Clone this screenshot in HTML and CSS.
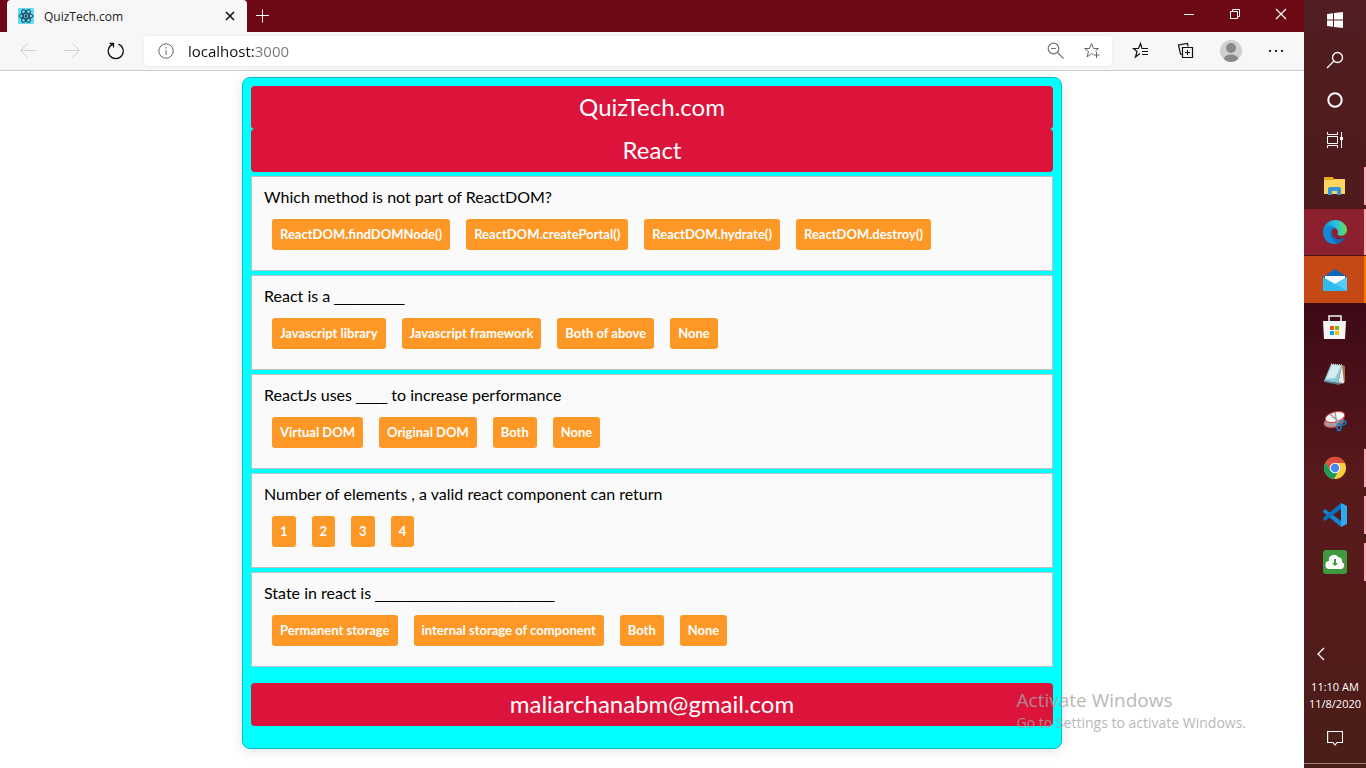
FILE: index.html
```html
<!DOCTYPE html>
<html lang="en">
<head>
<meta charset="utf-8">
<title>QuizTech.com</title>
<link rel="stylesheet" href="styles.css">
</head>
<body>
<div class="desktop">
  <div class="browser">
    <header class="titlebar">
      <div class="tab">
        <svg class="favicon" width="16" height="16" viewBox="0 0 16 16" fill="none" stroke="#20414d"><rect width="16" height="16" rx="1" fill="#61dafb" stroke="none"/><ellipse cx="8" cy="8" rx="7" ry="2.7"/><ellipse cx="8" cy="8" rx="7" ry="2.7" transform="rotate(60 8 8)"/><ellipse cx="8" cy="8" rx="7" ry="2.7" transform="rotate(120 8 8)"/><circle cx="8" cy="8" r="1" fill="#20414d"/></svg>
        <span class="tab-title">QuizTech.com</span>
        <button class="tab-close" aria-label="Close tab"><svg width="10" height="10" viewBox="0 0 10 10" stroke="#111" stroke-width="1.6"><path d="M1 1l8 8M9 1l-8 8"/></svg></button>
      </div>
      <button class="new-tab" aria-label="New tab"><svg width="14" height="14" viewBox="0 0 14 14" stroke="#fff"><path d="M6.500 .5v13M0 6.500h13"/></svg></button>
      <div class="window-controls">
        <button aria-label="Minimize"><svg width="12" height="12" viewBox="0 0 12 12" stroke="#fff"><path d="M1 6.500h10"/></svg></button>
        <button aria-label="Restore"><svg width="12" height="12" viewBox="0 0 12 12" fill="none" stroke="#fff"><path d="M1.500 3.500h7v7h-7zM3.500 3.500v-2h7v7h-2"/></svg></button>
        <button aria-label="Close"><svg width="12" height="12" viewBox="0 0 12 12" stroke="#fff" stroke-width="1.200"><path d="M1 1l10 10M11 1L1 11"/></svg></button>
      </div>
    </header>
    <nav class="toolbar">
      <button class="nav-button" aria-label="Back"><svg width="18" height="18" viewBox="0 0 18 18" fill="none" stroke="#cfcfcf"><path d="M17 8.500H1.500M8.500 1.500l-7 7 7 7"/></svg></button>
      <button class="nav-button" aria-label="Forward"><svg width="18" height="18" viewBox="0 0 18 18" fill="none" stroke="#cfcfcf"><path d="M1 8.500h15.500M9.500 1.500l7 7-7 7"/></svg></button>
      <button class="nav-button" aria-label="Refresh"><svg width="18" height="18" viewBox="0 0 18 18" fill="none" stroke="#111" stroke-width="1.300"><path d="M11.500 2.200A7.500 7.500 0 1 1 6 2.200M2.500 1.500H6.500V5.500"/></svg></button>
      <div class="address">
        <svg width="16" height="16" viewBox="0 0 16 16" fill="none" stroke="#666"><circle cx="8" cy="8" r="7.200"/><path d="M8 7v5M8 4v1.500"/></svg>
        <input class="url" type="text" value="localhost:3000" aria-label="Address">
        <button aria-label="Zoom"><svg width="18" height="18" viewBox="0 0 18 18" fill="none" stroke="#767676" stroke-width="1.200"><circle cx="6.500" cy="6.500" r="5.300"/><path d="M4 6.500h5M10.500 10.500l6 6"/></svg></button>
        <button aria-label="Add to favorites"><svg width="18" height="18" viewBox="0 0 18 18" fill="none" stroke="#666"><path d="M10 12.500L8.500 11.500 4 15l1.500-5.500L1.500 6.500h5l2-5 2 5h5L12.500 9M13.500 10v6M10.500 13h6"/></svg></button>
      </div>
      <div class="tools">
        <button aria-label="Favorites"><svg width="18" height="18" viewBox="0 0 18 18" fill="none" stroke="#111" stroke-width="1.200"><path d="M8 11.500L3.500 15 5 9.500 1.500 6.500h5l2-5L10 6.500h6M10 9.500h6M10 12.500h6"/></svg></button>
        <button aria-label="Collections"><svg width="18" height="18" viewBox="0 0 18 18" fill="none" stroke="#111" stroke-width="1.200"><path d="M5.500 5.500h10v10h-10zM10.500 8v5M8 10.500h5M5 12.500L3.500 12 1.500 3l9-1.500.5 3"/></svg></button>
        <button aria-label="Profile"><svg width="22" height="22" viewBox="0 0 22 22"><circle cx="11" cy="11" r="11" fill="#d2d0ce"/><circle cx="11" cy="8" r="5" fill="#8a8886"/><path d="M4 19c0-6 14-6 14 0-4 4-10 4-14 0z" fill="#8a8886"/></svg></button>
        <button aria-label="Settings and more"><svg width="16" height="16" viewBox="0 0 16 16" fill="#222"><path d="M1 7h2v2H1zM7 7h2v2H7zM13 7h2v2h-2z"/></svg></button>
      </div>
    </nav>
    <main class="page">
      <div class="quiz">
        <h1 class="banner">QuizTech.com</h1>
        <h2 class="banner">React</h2>
        <div class="questions">
          <section class="question">
            <p>Which method is not part of ReactDOM?</p>
            <div class="options"><button>ReactDOM.findDOMNode()</button><button>ReactDOM.createPortal()</button><button>ReactDOM.hydrate()</button><button>ReactDOM.destroy()</button></div>
          </section>
          <section class="question">
            <p>React is a <span class="blank">_________</span></p>
            <div class="options"><button>Javascript library</button><button>Javascript framework</button><button>Both of above</button><button>None</button></div>
          </section>
          <section class="question">
            <p>ReactJs uses <span class="blank">____</span> to increase performance</p>
            <div class="options"><button>Virtual DOM</button><button>Original DOM</button><button>Both</button><button>None</button></div>
          </section>
          <section class="question">
            <p>Number of elements , a valid react component can return</p>
            <div class="options"><button>1</button><button>2</button><button>3</button><button>4</button></div>
          </section>
          <section class="question">
            <p>State in react is <span class="blank">_______________________</span></p>
            <div class="options"><button>Permanent storage</button><button>internal storage of component</button><button>Both</button><button>None</button></div>
          </section>
        </div>
        <footer class="banner">maliarchanabm@gmail.com</footer>
      </div>
    </main>
  </div>
  <aside class="taskbar">
    <button class="system" aria-label="Start"><svg width="16" height="16" viewBox="0 0 16 16" fill="#fff"><path d="M0 2l6-.8v6.300H0zM7 1l9-1v7.500H7zM0 8.500h6v6.300L0 14zM7 8.500h9V16l-9-1z"/></svg></button>
    <button class="system" aria-label="Search"><svg width="18" height="18" viewBox="0 0 18 18" fill="none" stroke="#fff" stroke-width="1.300"><circle cx="11.500" cy="6.500" r="5"/><path d="M8 10l-7 7"/></svg></button>
    <button class="system" aria-label="Cortana"><svg width="16" height="16" viewBox="0 0 16 16" fill="none" stroke="#fff" stroke-width="2"><circle cx="8" cy="8" r="6.700"/></svg></button>
    <button class="system" aria-label="Task view"><svg width="16" height="16" viewBox="0 0 16 16" fill="none" stroke="#fff"><path d="M.5 4.500h10v7H.5zM.5 0v2.500h10V0M.5 16v-2.500h10V16M14.500 0v16"/><path d="M13 5h3v3h-3z" fill="#fff" stroke="none"/></svg></button>
    <div class="apps">
      <button class="app running" aria-label="File Explorer"><svg width="24" height="24" viewBox="0 0 24 24"><path d="M1 3h9l1 2h11v15H1z" fill="#e9a81c"/><path d="M1 6h9l1-1h11v15H1z" fill="#ffd55f"/><path d="M5 21v-6q0-2 2-2h9q2 0 2 2v6h-4v-4H9v4z" fill="#3595dc"/></svg></button>
      <button class="app running active" aria-label="Microsoft Edge"><svg width="24" height="24" viewBox="0 0 24 24"><defs><linearGradient id="edge"><stop stop-color="#168bd4"/><stop offset=".55" stop-color="#29c5df"/><stop offset="1" stop-color="#66df4a"/></linearGradient></defs><path d="M0 11C1 4 6 0 12 0c7 0 12 5 12 10 0 5-6 7-9 5-1-1 0-1 0-3 0-5-9-8-15-1z" fill="url(#edge)"/><path d="M0 11c2-4 9-6 12-3-5 1-4 9 2 11 4 1 7-1 8-2-2 5-6 7-10 7C5 24 0 18 0 11z" fill="#1269bb"/><path d="M0 11c1-5 10-6 12-3-5 0-8 9 2 16h-3C4 24 0 18 0 11z" fill="#1489d5"/></svg></button>
      <button class="app mail" aria-label="Mail"><svg width="24" height="24" viewBox="0 0 24 24"><path d="M0 9L12 1l12 8v14H0z" fill="#0868bc"/><path d="M2 8h20v9H2z" fill="#fff"/><path d="M0 9l12 7L24 9v14H0z" fill="#32b9ee"/><path d="M12 16l12 7V9z" fill="#55ccf4"/></svg></button>
      <button class="app" aria-label="Microsoft Store"><svg width="24" height="24" viewBox="0 0 24 24"><path d="M6 7V1h12v6" fill="none" stroke="#f4f4f4" stroke-width="1.500"/><path d="M0 6h23l-1 18H1z" fill="#f4f4f4"/><path d="M7 11h4v4H7z" fill="#f25022"/><path d="M12 11h4v4h-4z" fill="#7fba00"/><path d="M7 16h4v4H7z" fill="#00a4ef"/><path d="M12 16h4v4h-4z" fill="#ffb900"/></svg></button>
      <button class="app" aria-label="Notepad"><svg width="24" height="24" viewBox="0 0 24 24"><path d="M19 3l3 1v16l-3 2z" fill="#9f7344"/><path d="M8 2l11 1-4 18-14-2z" fill="#8cc9d5"/><path d="M9 3l9 1-6 12-9 1z" fill="#d6edf0"/><path d="M19 3l2 18-6 1z" fill="#e9eff0"/><path d="M1 19l14 2 4-1-3 3-15-3z" fill="#537c89"/><path d="M8 2l12 1" stroke="#ddd" stroke-dasharray="1 1"/></svg></button>
      <button class="app" aria-label="Snipping Tool"><svg width="24" height="24" viewBox="0 0 24 24" fill="none"><ellipse cx="11" cy="13" rx="10" ry="5" fill="#a99c9e" stroke="#d15b64" transform="rotate(-12 11 13)"/><ellipse cx="12" cy="8" rx="10" ry="5" fill="#fff" stroke="#df3845" transform="rotate(-15 12 8)"/><path d="M7 5l10 9M12 3l2 12" stroke="#999" stroke-width="1.500"/><g stroke="#187dbf" stroke-width="1.500"><ellipse cx="20" cy="14" rx="3" ry="2" transform="rotate(-20 20 14)"/><ellipse cx="16" cy="18" rx="2" ry="3.500"/></g></svg></button>
      <button class="app running" aria-label="Google Chrome"><svg width="24" height="24" viewBox="0 0 24 24"><circle cx="12" cy="12" r="11" fill="#fbcd3c"/><path d="M2.500 6.500A11 11 0 0 1 22 7H12z" fill="#dc4b3e"/><path d="M2.500 6.500L7 14l5-7z" fill="#dc4b3e"/><path d="M2.500 6.500A11 11 0 0 0 11 23l5-9H7z" fill="#1a9b5a"/><circle cx="12" cy="12" r="5.300" fill="#f8f8f8"/><circle cx="12" cy="12" r="4.200" fill="#4688f4"/></svg></button>
      <button class="app running" aria-label="Visual Studio Code"><svg width="24" height="24" viewBox="0 0 24 24"><path d="M0 8l2-2 16 12v6L0 9z" fill="#1686d0"/><path d="M0 16l2 2L18 6V0L0 15z" fill="#0872bb"/><path d="M18 0l6 3v18l-6 3z" fill="#2caaf3"/></svg></button>
      <button class="app running" aria-label="Cloud download"><svg width="24" height="24" viewBox="0 0 24 24"><rect width="24" height="24" rx="3" fill="#3d9a3d"/><path d="M7 19a4 4 0 0 1-1-8 5 5 0 0 1 9-4 4 4 0 0 1 4 5c4 2 2 7-1 7z" fill="#fff"/><path d="M11 9h2v4h2l-3 3-3-3h2z" fill="#3d9a3d"/></svg></button>
    </div>
    <div class="tray">
      <button class="chevron" aria-label="Show hidden icons"><svg width="8" height="14" viewBox="0 0 8 14" fill="none" stroke="#fff" stroke-width="1.300"><path d="M7 1L1 7l6 6"/></svg></button>
      <time class="clock" datetime="2020-11-08T11:10">11:10 AM<br>11/8/2020</time>
      <button class="notifications" aria-label="Notifications"><svg width="16" height="16" viewBox="0 0 16 16" fill="none" stroke="#fff" stroke-width="1.200"><path d="M.6 1.500h15v11H10L8 15l-2-2.500H.6z"/></svg></button>
    </div>
  </aside>
  <div class="activation"><strong>Activate Windows</strong><span>Go to Settings to activate Windows.</span></div>
</div>
</body>
</html>
```
FILE: styles.css
```css
* { box-sizing: border-box; }
body { margin: 0; font-family: "Open Sans", sans-serif; }
button { margin: 0; padding: 0; border: 0; background: none; font: inherit; color: inherit; }
svg { display: block; flex: none; }

.desktop { position: relative; display: flex; min-height: 100vh; }
.browser { flex: 1; min-width: 0; background: #fff; }

.titlebar { display: flex; height: 32px; padding-left: 7px; background: #6d0914; }
.tab { display: flex; align-items: center; width: 240px; padding: 0 12px 0 11px; gap: 10px; border-radius: 4px 4px 0 0; background: #f7f7f7; font-size: 12px; color: #222; }
.tab-title { flex: 1; }
.new-tab { padding: 0 9px; }
.window-controls { display: flex; margin-left: auto; }
.window-controls button { display: grid; place-items: center; width: 46px; padding-bottom: 4px; }

.toolbar { display: flex; align-items: center; height: 39px; padding: 0 6px; background: #f7f7f7; border-bottom: 1px solid #ccc; }
.nav-button { display: grid; place-items: center; width: 44px; height: 32px; }
.address { display: flex; flex: 1; align-items: center; height: 30px; margin-left: 6px; padding: 0 11px 0 14px; gap: 18px; border-radius: 4px; background: #fff; box-shadow: 0 0 3px #e2e2e2; }
.url { flex: 1; min-width: 0; height: 28px; padding: 0; margin-left: -4px; border: 0; outline: 0; font: 15px "Open Sans", sans-serif; color: transparent; background: linear-gradient(90deg, #111 66px, #777 66px); background-clip: text; -webkit-background-clip: text; }
.tools { display: flex; margin-left: 6px; }
.tools button { display: grid; place-items: center; width: 45px; height: 32px; }

.page { padding: 6px 16px 19px; }
.quiz { max-width: 820px; margin: 0 auto; padding: 8px 8px 22px; border: 1px solid #00bfcb; border-radius: 8px; background: #0ff; box-shadow: 0 2px 12px rgba(0, 0, 0, .12); font-family: Lato, sans-serif; }
.banner { margin: 0; padding-bottom: 1px; border-radius: 4px; background: #dc143c; color: #fff; font-size: 24px; font-weight: 400; line-height: 42px; text-align: center; }
.questions { display: grid; gap: 4px; padding: 4px 0 16px; }
.question { padding: 8px 12px 20px; border: 1px solid #c0c0c0; background: #fafafa; }
.question p { margin: 0 0 10px; font-size: 16px; line-height: 24px; color: #000; }
.blank { font-family: "Liberation Sans", sans-serif; font-size: 14px; line-height: 1; }
.options { display: flex; flex-wrap: wrap; gap: 16px; padding-left: 8px; }
.options button { padding: 0 8px; border-radius: 3px; background: #fd9827; color: #fff; font-size: 13px; font-weight: 700; line-height: 31px; }

.taskbar { display: flex; flex-direction: column; width: 62px; background: linear-gradient(#511e21 0, #4e1a1b 207px, #3d0916 300px, #581a1b 480px, #531b1a 620px, #4a1e18); color: #fff; }
.system, .app { display: grid; place-items: center; width: 100%; height: 40px; }
.apps { padding-top: 2px; }
.app { height: 47px; background: linear-gradient(#ffafbb, #ffafbb) right / 0 0 no-repeat; }
.app.running { background-size: 2px 38px; }
.app.active { background-color: #8d202e; background-size: 2px 100%; border-bottom: 1px solid #48131b; }
.app.mail { background-color: #c44914; background-image: linear-gradient(#ff7600, #ff7600); background-size: 2px 100%; }
.tray { display: flex; flex-direction: column; align-items: center; margin-top: auto; padding-bottom: 4px; }
.chevron { align-self: flex-start; margin-left: 13px; padding-bottom: 17px; }
.clock { font-size: 11px; line-height: 17px; text-align: center; white-space: nowrap; }
.notifications { display: grid; place-items: center; width: 100%; height: 52px; border-bottom: 1px solid #987f7c; }

.activation { position: absolute; right: 120px; bottom: 34px; display: grid; color: rgba(165, 165, 165, .8); pointer-events: none; }
.activation strong { font-size: 19px; font-weight: 400; line-height: 24px; }
.activation span { font-size: 14px; line-height: 22px; }
```
